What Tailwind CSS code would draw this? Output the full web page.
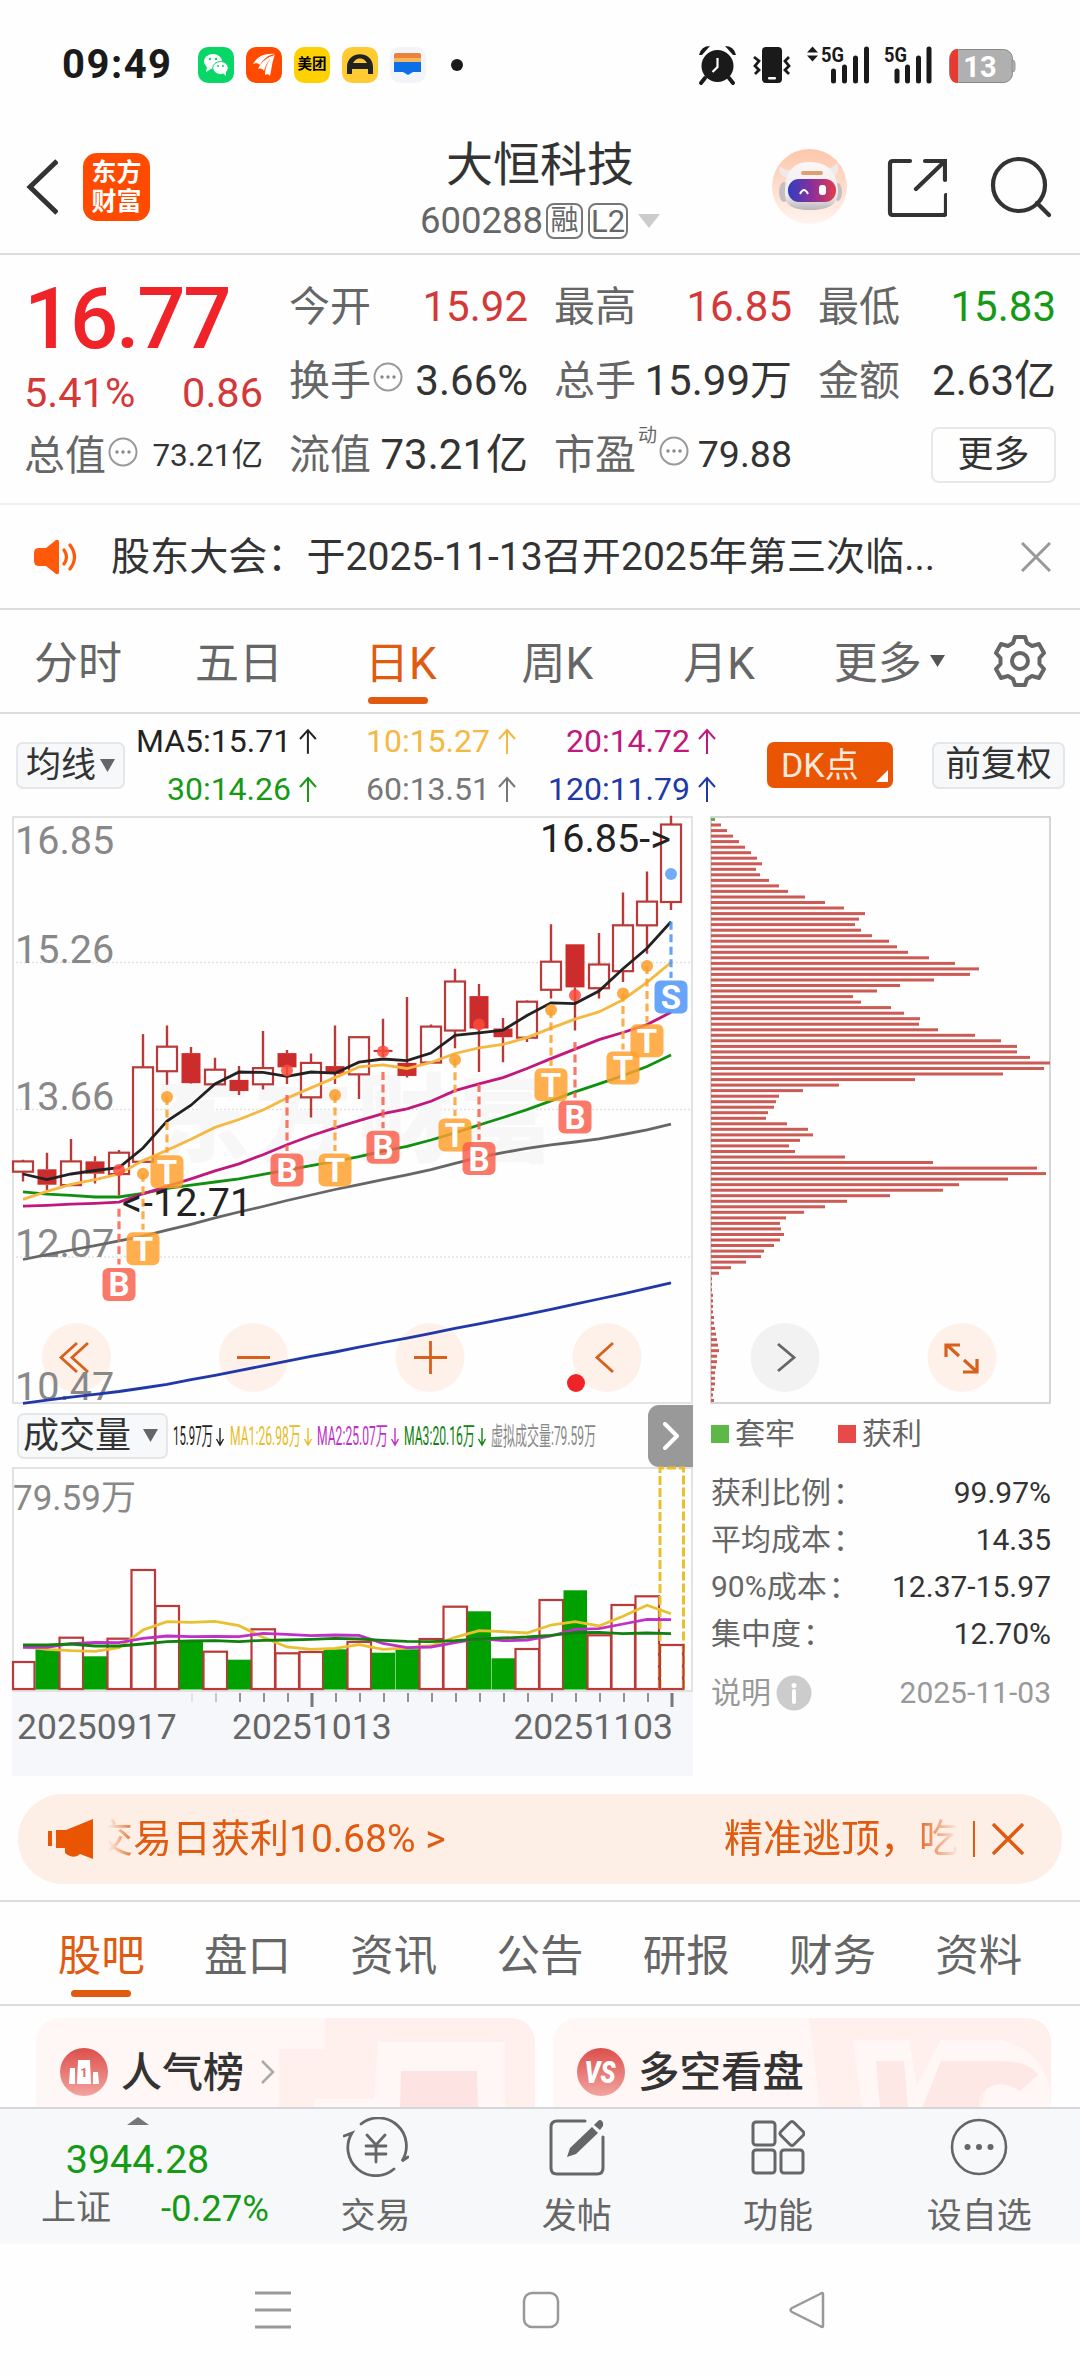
<!DOCTYPE html>
<html lang="zh-CN">
<head>
  <meta charset="UTF-8">
  <title>大恒科技 600288</title>
  <script src="https://cdn.jsdelivr.net/npm/@tailwindcss/browser@4"></script>
  <style>
    body{
      font-family: Roboto, "Noto Sans CJK SC", sans-serif;
      background-color: #fefefe;
    }
  </style>
</head>
<body class="w-[1080px] h-[2376px] overflow-hidden leading-none text-[#333] whitespace-nowrap">

  <!-- status bar -->
  <div class="h-[113px] pt-[16px] pl-[62px] pr-[64px] flex items-center justify-between">
    <div class="flex items-center">
      <span class="text-[40px] font-bold text-[#1a1a1a] w-[136px] tracking-[1.5px]">09:49</span>
      <div class="flex items-center gap-[12px]">
        <svg class="w-9 h-9" viewBox="0 0 36 36">
          <rect width="36" height="36" rx="10" fill="#08d667"/>
          <ellipse cx="15" cy="14.5" rx="9" ry="7.5" fill="#fff"/><path d="M9 20l-1 5 5-3z" fill="#fff"/>
          <ellipse cx="22.500" cy="21" rx="7.800" ry="6.500" fill="#fff" stroke="#08d667"/><path d="M25 26l3 3v-4z" fill="#fff"/>
          <g fill="#08d667"><circle cx="12" cy="12" r="1.200"/><circle cx="18" cy="12" r="1.200"/><circle cx="20" cy="19" r="1"/><circle cx="25" cy="19" r="1"/></g>
        </svg>
        <svg class="w-9 h-9" viewBox="0 0 36 36">
          <rect width="36" height="36" rx="10" fill="#ff4a00"/>
          <path d="M7 17C12 9 19 6 29 7c-7 1-12 5-15 11-2-2-4-2-7-1zM12 22c3-7 9-12 17-14-6 4-9 9-11 16-1-2-3-3-6-2zM19 28c0-8 3-15 10-20-3 6-3 13-5 21-1-2-3-2-5-1z" fill="#fff"/>
        </svg>
        <div class="w-9 h-9 rounded-[10px] bg-[#ffd100] flex items-center justify-center text-[14.500px] font-bold text-black pt-px">美团</div>
        <svg class="w-9 h-9" viewBox="0 0 36 36">
          <rect width="36" height="36" rx="10" fill="#ffcb33"/>
          <path d="M5 20C5 3 31 3 31 20v7h-5v-8C24 9 12 9 10 19v8H5z" fill="#222"/><path d="M9 16h18v6H9z" fill="#222"/>
        </svg>
        <svg class="w-9 h-9" viewBox="0 0 36 36">
          <rect width="36" height="36" rx="10" fill="#f3f4f8"/>
          <path d="M4 8q0-2 2-2h23q2 0 2 2v6H4z" fill="#e8823c"/><path d="M4 11h27v6H4z" fill="#f6b75c"/>
          <path d="M4 15h27v10h-8l-5 3-5-3H4z" fill="#0b6fe8"/>
        </svg>
        <div class="w-[12px] h-[12px] rounded-full bg-[#1a1a1a] ml-[13px]"></div>
      </div>
    </div>
    <svg class="w-[318px] h-10 overflow-visible" viewBox="697 44 318 40">
      <g fill="#1a1a1a">
        <circle cx="716.500" cy="65" r="16"/>
        <path d="M704 77l-4 5M728 77l4 5" stroke="#1a1a1a" stroke-width="4" stroke-linecap="round"/>
        <path d="M698 54q2-9 11-9l-8 9zM735 54q-2-9-11-9l8 9z"/>
        <path d="M716.500 57v9l-5 5" fill="none" stroke="#fff" stroke-width="2.200"/>
        <rect x="761" y="46" width="20" height="36" rx="4"/>
        <path d="M753 56l5 4-4 5 4 4-4 4M788 56l-4 4 4 5-4 4 4 4" fill="none" stroke="#1a1a1a" stroke-width="2.800"/>
        <path d="M806 51.500h11l-5.500-6zM806 54.500h11l-5.500 6z"/>
        <path d="M832.500 70v10M843.500 66v14M854.500 57v23M865.500 48v32M896 70v10M906.500 66v14M917.500 57v23M928 48v32" stroke="#1a1a1a" stroke-width="5" stroke-linecap="round"/>
        <text x="820" y="61" font-size="21" font-weight="700" textLength="23" lengthAdjust="spacingAndGlyphs">5G</text>
        <text x="883" y="61" font-size="21" font-weight="700" textLength="23" lengthAdjust="spacingAndGlyphs">5G</text>
      </g>
      <rect x="767" y="76" width="8" height="2.500" rx="1" fill="#fff"/>
      <rect x="948.500" y="48.500" width="63" height="33" rx="9" fill="#b0b0b0" stroke="#888"/>
      <path d="M1011 59q3 0 3 3v6q0 3-3 3z" fill="#b0b0b0" stroke="#888" stroke-width=".8"/>
      <path d="M957 48v34q-8 0-8-9V57q0-9 8-9z" fill="#e83a30"/>
      <text x="979" y="75.500" font-size="29" font-weight="700" fill="#fff" text-anchor="middle">13</text>
    </svg>
  </div>

  <!-- header -->
  <header class="h-[142px] border-b-2 border-[#dcdcdc] flex justify-between px-[26px]">
    <div class="flex items-center pt-[7px] w-[340px]">
      <svg class="w-8 h-14" viewBox="0 0 32 56" fill="none" stroke="#333" stroke-width="5"><path d="M31 2L4 28l27 26"/></svg>
      <div class="ml-[25px] w-[67px] h-[68px] rounded-[14px] bg-[#ff4a00] text-white font-bold text-[25px] leading-[29px] flex flex-col items-center justify-center"><span>东方</span><span>财富</span></div>
    </div>
    <div class="flex flex-col items-center pt-[28px] w-[240px]">
      <h1 class="text-[47px] h-[62px]">大恒科技</h1>
      <div class="flex items-center text-[36.500px] text-[#666] h-[36px]">
        <span>600288</span>
        <span class="ml-[3px] w-[37px] h-[36px] border-2 border-[#777] rounded-[8px] text-[28px] flex items-center justify-center">融</span>
        <span class="ml-[5px] w-[40px] h-[36px] border-2 border-[#777] rounded-[8px] text-[31px] flex items-center justify-center">L2</span>
        <svg class="w-[22px] h-[14px] ml-[10px]" viewBox="0 0 22 14"><path d="M0 0h22L11 14z" fill="#ccc"/></svg>
      </div>
    </div>
    <div class="flex items-center justify-end w-[340px] pt-[7px] pr-[2px]">
      <svg class="w-[75px] h-[75px]" viewBox="0 0 75 75">
        <defs>
          <linearGradient id="botBg" x2="0" y2="1"><stop stop-color="#fdc6ab"/><stop offset="1" stop-color="#fff4ef"/></linearGradient>
          <linearGradient id="botHead" x2="0" y2="1"><stop stop-color="#fbf7f7"/><stop offset=".7" stop-color="#efecee"/><stop offset="1" stop-color="#b9b4b8"/></linearGradient>
          <linearGradient id="botFace"><stop stop-color="#2f3fc0"/><stop offset=".5" stop-color="#8a2f9a"/><stop offset="1" stop-color="#e23c4c"/></linearGradient>
        </defs>
        <circle cx="37.500" cy="37.500" r="37.500" fill="url(#botBg)"/>
        <path d="M16 29Q5 27 8 17q4 5 12 4zM59 29q10-4 6-15-3 5-11 6z" fill="#efe9ea"/>
        <ellipse cx="12" cy="43" rx="5" ry="10" fill="#c4bec2"/><ellipse cx="66" cy="43" rx="4" ry="9" fill="#c4bec2"/>
        <path d="M38 13c21 0 27 14 28 28 0 14-8 20-28 20S12 55 13 41c1-15 5-28 25-28z" fill="url(#botHead)"/>
        <rect x="29" y="22" width="22" height="4" rx="2" fill="#dfa070"/>
        <rect x="16" y="30" width="48" height="23" rx="11" fill="url(#botFace)"/>
        <path d="M28 45q4-8 8 0" stroke="#fff" stroke-width="2" fill="none"/><rect x="47" y="36" width="7" height="10" rx="3" fill="#fff"/>
      </svg>
      <svg class="w-[60px] h-[60px] ml-[40px]" viewBox="0 0 60 60" fill="none" stroke="#333" stroke-width="4.200" stroke-linecap="round"><path d="M23 4H6Q3 4 3 7v48q0 3 3 3h50q3 0 3-3V38M38 4h20v19M57 5L29 32"/></svg>
      <svg class="w-[62px] h-[62px] ml-[43px]" viewBox="0 0 62 62" fill="none" stroke="#333" stroke-width="4.200" stroke-linecap="round"><circle cx="29" cy="29" r="26"/><path d="M47 47l12 12"/></svg>
    </div>
  </header>

  <!-- quote -->
  <section class="h-[250px] border-b-2 border-[#eee] pt-[15px] px-[26px] flex gap-[26px] text-[42px]">
    <div class="w-[237px] shrink-0">
      <div class="h-[98px] flex items-center text-[85px] font-medium text-[#f02428] tracking-[-2.3px] -ml-[2px]">16.77</div>
      <div class="h-[50px] flex items-center justify-between text-[41.500px] text-[#d43838] -ml-[2px]"><span>5.41%</span><span>0.86</span></div>
      <div class="h-[74px] mt-[1px] flex items-center justify-between">
        <div class="flex items-center text-[41px] text-[#666] -ml-[2px]">总值<svg class="w-[30px] h-[30px] ml-[2px] mb-2" viewBox="0 0 30 30"><circle cx="15" cy="15" r="13.500" fill="none" stroke="#999" stroke-width="2"/><g fill="#888"><circle cx="9" cy="15" r="1.700"/><circle cx="15" cy="15" r="1.700"/><circle cx="21" cy="15" r="1.700"/></g></svg></div>
        <span class="text-[31.500px]">73.21亿</span>
      </div>
    </div>
    <div class="grid grid-cols-[239px_238px_238px] gap-x-[26px] auto-rows-[74px] shrink-0">
      <div class="flex items-center justify-between"><span class="text-[41px] text-[#666]">今开</span><span class="text-[#d43838]">15.92</span></div>
      <div class="flex items-center justify-between"><span class="text-[41px] text-[#666]">最高</span><span class="text-[#d43838]">16.85</span></div>
      <div class="flex items-center justify-between"><span class="text-[41px] text-[#666]">最低</span><span class="text-[#169a16]">15.83</span></div>
      <div class="flex items-center justify-between"><div class="flex items-center text-[41px] text-[#666]">换手<svg class="w-[30px] h-[30px] ml-[2px] mb-2" viewBox="0 0 30 30"><circle cx="15" cy="15" r="13.500" fill="none" stroke="#999" stroke-width="2"/><g fill="#888"><circle cx="9" cy="15" r="1.700"/><circle cx="15" cy="15" r="1.700"/><circle cx="21" cy="15" r="1.700"/></g></svg></div><span>3.66%</span></div>
      <div class="flex items-center justify-between"><span class="text-[41px] text-[#666]">总手</span><span>15.99万</span></div>
      <div class="flex items-center justify-between"><span class="text-[41px] text-[#666]">金额</span><span>2.63亿</span></div>
      <div class="flex items-center justify-between"><span class="text-[41px] text-[#666]">流值</span><span>73.21亿</span></div>
      <div class="flex items-center justify-between"><div class="flex items-center text-[41px] text-[#666]">市盈<span class="text-[19px] self-start -mt-[9px] ml-[2px]">动</span><svg class="w-[30px] h-[30px] ml-[2px] mb-2" viewBox="0 0 30 30"><circle cx="15" cy="15" r="13.500" fill="none" stroke="#999" stroke-width="2"/><g fill="#888"><circle cx="9" cy="15" r="1.700"/><circle cx="15" cy="15" r="1.700"/><circle cx="21" cy="15" r="1.700"/></g></svg></div><span class="text-[37.500px]">79.88</span></div>
      <div class="flex items-center justify-end"><button class="w-[125px] h-[56px] border-2 border-[#e6e8ea] rounded-[8px] text-[36px] leading-none">更多</button></div>
    </div>
  </section>

  <!-- notice -->
  <section class="h-[105px] border-b-2 border-[#dcdcdc] flex items-center pl-[34px] pr-[29px]">
    <svg class="w-[44px] h-[36px]" viewBox="0 0 44 36"><path d="M5 9h7l10-8q3-1 3 2v30q0 3-3 2l-10-8H5q-5 0-5-5v-8q0-5 5-5z" fill="#ff5a0a"/><path d="M30 11q5 7 0 14M36 6q9 12 0 24" fill="none" stroke="#ff5a0a" stroke-width="3.200" stroke-linecap="round"/></svg>
    <span class="ml-[33px] pt-[2px] text-[39.100px] flex-1">股东大会：于2025-11-13召开2025年第三次临...</span>
    <svg class="w-[30px] h-[30px]" viewBox="0 0 30 30" stroke="#999" stroke-width="3"><path d="M1 1l28 28M29 1L1 29"/></svg>
  </section>

  <!-- period tabs -->
  <nav class="h-[104px] border-b-2 border-[#dcdcdc] flex items-center pl-[34px] text-[44px] text-[#666]">
    <span class="pt-[5px]">分时</span>
    <span class="pt-[5px] ml-[73px]">五日</span>
    <span class="pt-[5px] ml-[82px] text-[#e05a10] relative">日K<i class="absolute left-[3px] top-[60px] w-[60px] h-[7px] rounded-full bg-[#e05a10]"></i></span>
    <span class="pt-[5px] ml-[85px]">周K</span>
    <span class="pt-[5px] ml-[90px]">月K</span>
    <span class="pt-[5px] ml-[79px]">更多</span>
    <svg class="w-[15px] h-[12px] ml-[8px]" viewBox="0 0 15 12"><path d="M0 0h15L7.500 12z" fill="#555"/></svg>
    <svg class="w-[54px] h-[54px] ml-[48px]" viewBox="0 0 54 54" fill="none" stroke="#666" stroke-width="4" stroke-linejoin="round"><path d="M22 3h10l2 6 5 3 7-2 5 9-4.500 5v6l4.500 5-5 9-7-2-5 3-2 6H22l-2-6-5-3-7 2-5-9 4.500-5v-6L3 19l5-9 7 2 5-3z"/><circle cx="27" cy="27" r="8"/></svg>
  </nav>

  <!-- moving averages -->
  <section class="h-[102px] flex items-center pl-[16px] text-[32px]">
    <button class="w-[109px] h-[47px] rounded-[7px] border-2 border-[#e4e6ea] bg-[#f6f8fa] text-[35px] flex items-center justify-center">均线<svg class="w-[15px] h-[13px] ml-[4px]" viewBox="0 0 15 13"><path d="M0 0h15L7.500 13z" fill="#666"/></svg></button>
    <div id="maList" class="ml-[11px] grid grid-cols-[181px_199px_200px] auto-rows-[48px]"></div>
    <button class="relative ml-[51px] w-[126px] h-[46px] rounded-[7px] bg-[#ea5504] text-[#ffe9dc] text-[34px] text-left pl-[14px]">DK点<svg class="absolute right-[5px] bottom-[6px] w-[12px] h-[12px]" viewBox="0 0 12 12"><path d="M12 0v12H0z" fill="#fff"/></svg></button>
    <button class="ml-[39px] w-[133px] h-[47px] rounded-[7px] border-2 border-[#e4e6ea] bg-[#f6f8fa] text-[35.500px]">前复权</button>
  </section>

  <!-- charts -->
  <section class="flex h-[961px]">
    <div class="w-[681px] ml-[12px]">
      <svg id="kline" class="block w-[681px] h-[588px] overflow-visible" viewBox="0 0 681 588"></svg>
      <div class="h-[63px] flex items-center">
        <button class="ml-[5px] w-[151px] h-[46px] rounded-[7px] border-2 border-[#e4e6ea] bg-[#f6f8fa] text-[36px] flex items-center justify-between px-[4px]">成交量<svg class="w-[15px] h-[13px] mr-[4px]" viewBox="0 0 15 13"><path d="M0 0h15L7.500 13z" fill="#666"/></svg></button>
        <svg id="volLegend" class="ml-[5px] w-[475px] h-[36px] overflow-visible" viewBox="173 0 475 36"></svg>
        <div class="w-[45px] h-[62px] bg-[#999] rounded-l-[11px] flex items-center justify-center"><svg class="w-[16px] h-[28px]" viewBox="0 0 16 28" fill="none" stroke="#fff" stroke-width="4" stroke-linecap="round" stroke-linejoin="round"><path d="M2 2l12 12L2 26"/></svg></div>
      </div>
      <svg id="volume" class="block w-[681px] h-[225px] overflow-visible" viewBox="0 0 681 225"></svg>
      <div class="h-[84px] bg-[#f6f7fa] pl-[5px] pr-[20px] pt-[18px] flex text-[35.500px] text-[#666]">
        <span class="w-[215px]">20250917</span><span class="flex-1">20251013</span><span>20251103</span>
      </div>
    </div>

    <div class="ml-[17px] w-[342px]">
      <svg id="chips" class="block w-[342px] h-[588px] overflow-visible" viewBox="0 0 342 588"></svg>
      <div class="flex items-center h-[60px] text-[30px] text-[#666] pl-[1px]">
        <i class="w-[18px] h-[18px] bg-[#5cb947]"></i><span class="ml-[6px] w-[103px]">套牢</span>
        <i class="w-[18px] h-[18px] bg-[#e84a4a]"></i><span class="ml-[6px]">获利</span>
      </div>
      <div class="pt-[5px] pl-[1px] pr-[1px] text-[30px]">
        <div class="h-[47px] flex items-center justify-between"><span class="text-[#666]">获利比例<span class="ml-[2px]">：</span></span><span>99.97%</span></div>
        <div class="h-[47px] flex items-center justify-between"><span class="text-[#666]">平均成本<span class="ml-[2px]">：</span></span><span>14.35</span></div>
        <div class="h-[47px] flex items-center justify-between"><span class="text-[#666]">90%成本<span class="ml-[2px]">：</span></span><span>12.37-15.97</span></div>
        <div class="h-[47px] flex items-center justify-between"><span class="text-[#666]">集中度<span class="ml-[2px]">：</span></span><span>12.70%</span></div>
        <div class="h-[72px] flex items-center text-[#999]"><span>说明</span>
          <svg class="w-[36px] h-[36px] ml-[5px]" viewBox="0 0 36 36"><circle cx="18" cy="18" r="17.500" fill="#ccc"/><circle cx="18" cy="10.500" r="2.500" fill="#fff"/><path d="M18 16v11" stroke="#fff" stroke-width="4" stroke-linecap="round"/></svg>
          <span class="ml-auto">2025-11-03</span></div>
      </div>
    </div>
  </section>

  <!-- promo banner -->
  <section class="h-[125px] pt-[17px] px-[18px] border-b-2 border-[#dcdcdc]">
    <div class="h-[90px] rounded-full bg-[#fdeee6] flex items-center text-[39px] text-[#e05a10] pl-[29px] pr-[38px]">
      <svg class="w-[46px] h-[40px]" viewBox="0 0 46 40" fill="#ea5504"><path d="M1 12h4v15H1zM9 11h10L46 0v40l-13-5q-6 6-15-1v-5H9z"/></svg>
      <div class="ml-[15px] w-[347px] py-[6px] overflow-hidden flex [mask-image:linear-gradient(to_right,transparent,black_30px)]"><span class="-ml-[14px]">交易日获利10.68% &gt;</span></div>
      <div class="ml-auto w-[235px] py-[6px] overflow-hidden flex [mask-image:linear-gradient(to_left,transparent,black_45px)]"><span>精准逃顶，</span><span>吃</span></div>
      <i class="ml-[14px] w-[2px] h-[36px] bg-[#e05a10]"></i>
      <svg class="w-[32px] h-[32px] ml-[17px]" viewBox="0 0 32 32" stroke="#e05a10" stroke-width="3.400"><path d="M1 1l30 30M31 1L1 31"/></svg>
    </div>
  </section>

  <!-- content tabs -->
  <nav class="h-[104px] border-b-2 border-[#dcdcdc] px-[28px] grid grid-cols-7 items-center text-center text-[43.500px] text-[#666]">
    <span class="pt-[7px] relative text-[#e05a10]">股吧<i class="absolute left-[43px] top-[62px] w-[60px] h-[7px] rounded-full bg-[#e05a10]"></i></span>
    <span class="pt-[7px]">盘口</span>
    <span class="pt-[7px]">资讯</span>
    <span class="pt-[7px]">公告</span>
    <span class="pt-[7px]">研报</span>
    <span class="pt-[7px]">财务</span>
    <span class="pt-[7px]">资料</span>
  </nav>

  <!-- cards -->
  <section class="h-[101px] pt-[12px] px-[36px] flex gap-[18px] overflow-hidden">
    <div class="relative w-[499px] h-[200px] rounded-[24px] bg-[#fff7f5] overflow-hidden shrink-0">
      <svg class="absolute inset-0 w-[499px] h-[90px]" viewBox="0 0 499 90"><path d="M289 0h210v90h-30V24H342l-4 57h-59l-2 9h-34V31h46z" fill="#fff0ee"/><path d="M365 53h76l1 37h-78z" fill="#fde4e2"/></svg>
      <div class="relative flex items-center pt-[30px] pl-[24px] text-[41px] font-medium">
        <svg class="w-[48px] h-[48px]" viewBox="0 0 48 48"><defs><linearGradient id="ic" x2="0" y2="1"><stop stop-color="#dd4f4b"/><stop offset="1" stop-color="#f2a49f"/></linearGradient></defs><circle cx="24" cy="24" r="24" fill="url(#ic)"/><path d="M10 20h5v16H9zM18 12h12l1 24H17zM33 24h5l1 12h-6z" fill="#fff"/><text x="24" y="29" font-size="13" font-weight="700" fill="#e06a66" text-anchor="middle">1</text></svg>
        <span class="ml-[13px] pt-[2px]">人气榜</span>
        <svg class="w-[14px] h-[24px] ml-[17px]" viewBox="0 0 14 24" fill="none" stroke="#aaa" stroke-width="2.600"><path d="M1 1l11 11L1 23"/></svg>
      </div>
    </div>
    <div class="relative w-[498px] h-[200px] rounded-[24px] bg-[#fff7f5] overflow-hidden shrink-0">
      <svg class="absolute inset-0 w-[498px] h-[90px]" viewBox="0 0 498 90"><path d="M256 0h242v90H267z" fill="#fff0ee"/><path d="M300 22h56l8 45 24-45h60q50 12 50 68h-70l12-40h-35l-28 40h-68z" fill="#fff7f5"/><path d="M323 43h28l4 47h-28zM388 43h55q35 0 42 14l-18 16q-18-12-32-3-12 8-8 20h-58z" fill="#fde8e6"/></svg>
      <div class="relative flex items-center pt-[30px] pl-[24px] text-[41.500px] font-medium">
        <svg class="w-[48px] h-[48px]" viewBox="0 0 48 48"><circle cx="24" cy="24" r="24" fill="url(#ic)"/><text x="23" y="35" font-size="31" font-weight="900" font-style="italic" fill="#fff" text-anchor="middle" textLength="31" lengthAdjust="spacingAndGlyphs">VS</text></svg>
        <span class="ml-[13px] pt-[2px]">多空看盘</span>
      </div>
    </div>
  </section>

  <!-- bottom bar -->
  <footer class="h-[137px] bg-[#f6f8fa] border-t-2 border-[#d4d6d9] flex text-[35px] text-[#666]">
    <div class="w-[275px] shrink-0 pt-[8px] flex flex-col items-center">
      <svg class="w-[22px] h-[8px]" viewBox="0 0 22 8"><path d="M0 8L11 0l11 8z" fill="#777"/></svg>
      <span class="text-[39.500px] text-[#169a16] mt-[15px]">3944.28</span>
      <div class="mt-[11px] flex items-center justify-between w-[228px] ml-[35px]"><span>上证</span><span class="text-[36.500px] text-[#169a16]">-0.27%</span></div>
    </div>
    <div class="w-[201.500px] pt-[8px] flex flex-col items-center">
      <svg class="w-[66px] h-[60px]" viewBox="0 0 66 60" fill="none" stroke="#666" stroke-width="2.800" stroke-linecap="round"><path d="M18 7A28 28 0 0 1 59 44l6-4M51 52A28 28 0 0 1 9 16l-8 3M24 18l9 10 9-10M33 28v17M23 29h20M23 37h20"/></svg>
      <span class="mt-[22px]">交易</span>
    </div>
    <div class="w-[201.500px] pt-[8px] flex flex-col items-center">
      <svg class="w-[56px] h-[60px]" viewBox="0 0 56 60" fill="none" stroke="#666" stroke-width="3"><path d="M36 4H8Q2 4 2 10v41q0 6 6 6h40q6 0 6-6V20" stroke-linecap="round"/><path d="M18 40l3-9 22-21 6 6-22 21z" fill="#666" stroke="none"/><path d="M45 8l4-4q2-2 4 0t1 5l-3 4z" fill="#666" stroke="none"/></svg>
      <span class="mt-[22px]">发帖</span>
    </div>
    <div class="w-[201.500px] pt-[8px] flex flex-col items-center">
      <svg class="w-[54px] h-[60px]" viewBox="0 0 54 60" fill="none" stroke="#666" stroke-width="3"><rect x="2" y="5" width="22" height="23" rx="3"/><rect x="2" y="33" width="22" height="23" rx="3"/><rect x="30" y="33" width="22" height="23" rx="3"/><path d="M39 5.500q2-2 4 0l9 9q2 2 0 4l-9 9q-2 2-4 0l-9-9q-2-2 0-4z"/></svg>
      <span class="mt-[22px]">功能</span>
    </div>
    <div class="w-[201.500px] pt-[8px] flex flex-col items-center">
      <svg class="w-[60px] h-[60px]" viewBox="0 0 60 60"><circle cx="30" cy="30" r="27" fill="none" stroke="#666" stroke-width="2.600"/><g fill="#666"><circle cx="18.500" cy="30" r="3"/><circle cx="30" cy="30" r="3"/><circle cx="41.500" cy="30" r="3"/></g></svg>
      <span class="mt-[22px]">设自选</span>
    </div>
  </footer>

  <!-- system navigation -->
  <div class="h-[131px] flex items-center pl-[255px] text-[#999]">
    <svg class="w-[36px] h-[38px]" viewBox="0 0 36 38" stroke="#999" stroke-width="3"><path d="M0 2h36M0 19h36M0 36h36"/></svg>
    <svg class="w-[38px] h-[38px] ml-[231px]" viewBox="0 0 38 38" fill="none" stroke="#999" stroke-width="2.500"><rect x="2" y="2" width="34" height="34" rx="8"/></svg>
    <svg class="w-[38px] h-[38px] ml-[229px]" viewBox="0 0 38 38" fill="none" stroke="#999" stroke-width="2.500" stroke-linejoin="round"><path d="M34 3v32q0 2-3 0L3 21q-3-2 0-4L31 3q3-2 3 0z"/></svg>
  </div>

  <script>
    // Moving average readouts
    const mas = [
      ['MA5:15.71', '#222222'], ['10:15.27', '#f5b840'], ['20:14.72', '#c0187c'],
      ['30:14.26', '#169a16'], ['60:13.51', '#777777'], ['120:11.79', '#2038a8']
    ];
    document.getElementById('maList').innerHTML = mas.map(([text, color]) => `
      <div class="flex items-center justify-end gap-[8px]" style="color:${color}">
        <span>${text}</span>
        <svg class="w-[18px] h-[26px]" viewBox="0 0 18 26" fill="none" stroke="currentColor" stroke-width="2"><path d="M9 26V2M1 11l8-9 8 9"/></svg>
      </div>`).join('');

    // One slot per trading day, 24px wide
    const cx = i => 11 + 24 * i;
    // Price values are stored on the chart's own vertical scale
    const py = v => +(v * 0.3954 - 16).toFixed(1);
    const line = (data, fy, color, w) =>
      `<polyline points="${data.map((v, i) => cx(i) + ',' + fy(v)).join(' ')}" fill="none" stroke="${color}" stroke-width="${w}"/>`;

    // high, body top, body bottom, low, filled
    const candles = [
      [910,914,940,965,0],[892,934,973,988,1],[857,914,974,975,0],[901,914,945,970,1],[885,892,946,1000,0],
      [592,676,915,915,0],[570,624,686,720,0],[625,640,716,717,1],[652,682,719,720,0],[673,708,736,746,1],
      [584,678,719,732,0],[632,640,676,718,1],[641,665,752,803,0],[570,673,693,718,1],[598,600,694,756,0],
      [553,632,637,650,1],[498,665,698,702,1],[568,573,664,665,0],[427,459,583,628,0],[465,496,578,688,1],
      [551,578,600,663,1],[507,510,601,612,0],[314,409,480,502,0],[365,365,474,583,1],[336,416,476,502,0],
      [234,317,433,460,0],[181,257,317,389,0],[40,62,258,278,0]
    ];
    const ma120 = [1526,1518,1510,1503,1496,1487,1478,1466,1455,1443,1431,1419,1407,1396,1384,1372,1361,1349,1336,1325,1313,1301,1288,1275,1262,1249,1235,1221];
    const ma60 = [1162,1150,1138,1127,1115,1103,1088,1073,1057,1042,1028,1013,999,985,973,960,948,935,919,904,892,881,872,865,857,846,834,820];
    const ma30 = [991,997,1000,1004,1004,995,982,974,966,958,947,936,925,914,902,888,876,860,842,822,803,783,761,738,718,697,674,645];
    const ma20 = [1027,1025,1022,1020,1017,996,977,958,938,920,897,872,849,829,811,793,781,762,735,718,702,679,654,630,606,588,568,537];
    const ma10 = [1010,990,972,960,946,912,886,858,828,808,784,754,728,702,675,670,679,664,641,627,618,601,577,554,536,505,461,411];
    const ma5 = [946,960,946,937,930,880,812,772,718,688,689,699,688,691,663,655,659,640,595,589,582,545,513,515,483,427,375,308];
    // day, letter, dot, dashed line start, dashed line end, badge
    const marks = [
      [4,'B',936,1034,1175,1225],[5,'T',945,945,1087,1135],[6,'T',751,751,892,940],[11,'B',684,746,888,936],
      [13,'T',746,746,888,936],[15,'B',636,688,830,878],[18,'T',657,657,799,847],[19,'B',568,718,860,907],
      [22,'T',531,531,673,720],[23,'B',494,612,753,802],[25,'T',489,489,631,678],[26,'T',420,420,562,609],
      [27,'S',187,308,450,498]
    ];
    const markColor = { B: '#fa5f4c', T: '#ffa02c', S: '#4a94fa' };
    const dotColor = { B: '#fb4a3a', T: '#fa9c28', S: '#5a9cf8' };

    let k = '<rect x="1" y="1" width="679" height="586" fill="none" stroke="#e2e2e2" stroke-width="2"/>';
    k += [411, 783, 1156].map(v => `<path d="M0 ${py(v)}H680" stroke="#e2e2e2" stroke-width="1.500" stroke-dasharray="2 2"/>`).join('');
    k += '<text x="142" y="338" font-size="96" font-weight="900" fill="#f7f7f7" textLength="400">东方财富</text>';
    const circle = (x, fill) => `<circle cx="${x}" cy="541.500" r="34.500" fill="${fill}"/>`;
    k += [64.5, 241.5, 418, 595].map(x => circle(x, '#fef1ea')).join('');
    k += [['16.85', 136], ['15.26', 411], ['13.66', 783], ['12.07', 1155], ['10.47', 1517]].map(([t, v]) =>
      `<text x="3" y="${py(v)}" font-size="39.500" fill="#888">${t}</text>`).join('');
    candles.forEach(([h, t, b, l, filled], i) => {
      const x = cx(i);
      k += `<path d="M${x} ${py(h)}V${py(t)}M${x} ${py(b)}V${py(l)}" stroke="#b93a38" stroke-width="2.400"/>`;
      k += filled
        ? `<rect x="${x - 9.5}" y="${py(t)}" width="19" height="${(b - t) * 0.3954}" fill="#cc2c2c"/>`
        : `<rect x="${x - 10}" y="${py(t)}" width="20" height="${(b - t) * 0.3954}" fill="#fefefe" stroke="#b93a38" stroke-width="2.200"/>`;
    });
    k += line(ma120, py, '#2038a8', 2.8) + line(ma60, py, '#666', 2.8) + line(ma30, py, '#109010', 2.8)
      + line(ma20, py, '#c0187c', 2.8) + line(ma10, py, '#f5b840', 2.8) + line(ma5, py, '#222', 2.8);
    k += `<text x="110" y="${py(1052)}" font-size="39.500" fill="#222">&lt;-12.71</text>`;
    k += `<text x="528" y="${py(132)}" font-size="39.500" fill="#222">16.85-&gt;</text>`;
    marks.forEach(([i, m, dot, a, b, c]) => {
      const x = cx(i);
      k += `<path d="M${x} ${py(a)}V${py(b)}" stroke="${markColor[m]}" stroke-width="3.200" stroke-dasharray="8 4.500" opacity=".85"/>`;
      k += `<circle cx="${x}" cy="${py(dot)}" r="6" fill="${dotColor[m]}" opacity=".85"/>`;
      k += `<rect x="${x - 16.5}" y="${py(c) - 16.5}" width="33" height="33" rx="6" fill="${markColor[m]}" opacity=".84"/>`;
      k += `<text x="${x}" y="${py(c) + 12}" font-size="33" font-weight="700" fill="#fff" text-anchor="middle">${m}</text>`;
    });
    k += `<g fill="none" stroke="#d8601c" stroke-width="2.800"><path d="M65 527L49 541.500 65 556M76 527L60 541.500 76 556M225 541.500h33M402 541.500h33M418.500 525v33M601 527L585 541.500 601 556"/></g>`;
    k += '<circle cx="564" cy="567" r="9" fill="#f02428"/>';
    document.getElementById('kline').innerHTML = k;

    // Volume legend, squeezed to fit on one line
    const legend = [
      ['15.97万', 173, 40, '#222', 220], ['MA1:26.98万', 230, 71, '#e8bc28', 308],
      ['MA2:25.07万', 317, 71, '#c030c8', 395], ['MA3:20.16万', 404, 71, '#108010', 482],
      ['虚拟成交量:79.59万', 491, 105, '#888', 0]
    ];
    document.getElementById('volLegend').innerHTML = legend.map(([t, x, w, c, ax]) =>
      `<text x="${x}" y="27" font-size="25" fill="${c}" textLength="${w}" lengthAdjust="spacingAndGlyphs">${t}</text>`
      + (ax ? `<path d="M${ax} 10v17M${ax - 3.5} 21l3.500 6 3.500-6" fill="none" stroke="${c}" stroke-width="1.400"/>` : '')).join('');

    // Volume bars: top, filled
    const vy = v => +(v / 3 - 67).toFixed(1);
    const bars = [
      [786,0],[748,1],[713,0],[769,1],[716,0],[510,0],[618,0],[725,1],[755,0],[779,1],[688,0],[760,0],[756,0],[748,1],
      [726,0],[758,1],[748,1],[717,0],[620,0],[634,1],[775,1],[747,0],[600,0],[571,1],[706,0],[615,0],[589,0],[735,0]
    ];
    const vma1 = [740,748,752,754,743,690,665,667,664,677,712,741,748,745,734,748,744,737,712,692,695,699,675,665,678,649,616,641];
    const vma2 = [742,742,731,727,728,715,708,710,709,710,700,703,707,705,706,730,743,741,728,716,722,720,708,688,686,672,658,659];
    const vma3 = [735,735,732,738,738,732,725,723,722,725,721,720,718,715,717,721,724,725,722,717,714,711,706,698,697,701,699,701];
    let v = '<path d="M1 223V1H680V223" fill="none" stroke="#e2e2e2" stroke-width="2"/>';
    v += '<rect x="0" y="223" width="681" height="2" fill="#e2e2e2"/>';
    v += '<text x="1" y="43" font-size="35" fill="#888">79.59万</text>';
    bars.forEach(([t, filled], i) => {
      const x = cx(i);
      v += filled
        ? `<rect x="${x - 11.5}" y="${vy(t)}" width="23.500" height="${222.5 - vy(t)}" fill="#00a000"/>`
        : `<rect x="${Math.max(x - 11.5, 1)}" y="${vy(t)}" width="${i ? 23.5 : 21.5}" height="${222 - vy(t)}" fill="#fefefe" stroke="#b93a38" stroke-width="2.200"/>`;
    });
    v += '<path d="M648 222V1h23.500V222" fill="none" stroke="#e8c030" stroke-width="3" stroke-dasharray="9 3"/>';
    v += '<path d="M648 223V178h23.500V223" fill="none" stroke="#b93a38" stroke-width="2"/>';
    v += line(vma1, vy, '#e8c030', 2.8) + line(vma2, vy, '#c030c8', 2.8) + line(vma3, vy, '#108010', 2.8);
    for (let i = 7; i < 28; i++) {
      const major = i === 12 || i === 27;
      v += `<path d="M${cx(i) + 1} 226v${major ? 14 : 9}" stroke="${i < 8 ? '#ddd' : i < 9 ? '#bbb' : '#777'}" stroke-width="${major ? 3 : 1.6}"/>`;
    }
    document.getElementById('volume').innerHTML = v;

    // Holding cost distribution
    const chips = [4,10,16,22,28,34,40,46,51,45,49,58,68,77,94,114,133,154,148,144,150,161,178,186,197,218,244,268,259,223,189,166,142,150,180,193,209,208,227,264,290,306,306,319,339,333,292,204,128,92,68,65,63,57,55,76,97,102,89,78,84,134,222,326,335,297,248,232,179,136,114,93,75,69,70,73,69,63,53,50,35,20,8,1,1,1,2,2,2,2,3,3,4,5,6,7,8,6,6,5,4,4,4,3,2,3];
    let c = '<rect x="1" y="1" width="339" height="586" fill="none" stroke="#ccc" stroke-width="1.600"/>';
    c += chips.map((w, i) => `<rect x="1" y="${(2 + 5.533 * i).toFixed(1)}" width="${w}" height="3" fill="${i ? '#cc5a55' : '#6aa84f'}"/>`).join('');
    c += circle(75, '#f2f2f2') + circle(252, '#fef1ea');
    c += '<path d="M68 528l16 13.500L68 555" fill="none" stroke="#666" stroke-width="2.800"/>';
    c += '<path d="M236 541V529h14M237 529l12 11M267 543v13h-14M266 555l-12-11" fill="none" stroke="#d8601c" stroke-width="3.200"/>';
    document.getElementById('chips').innerHTML = c;
  </script>
</body>
</html>
